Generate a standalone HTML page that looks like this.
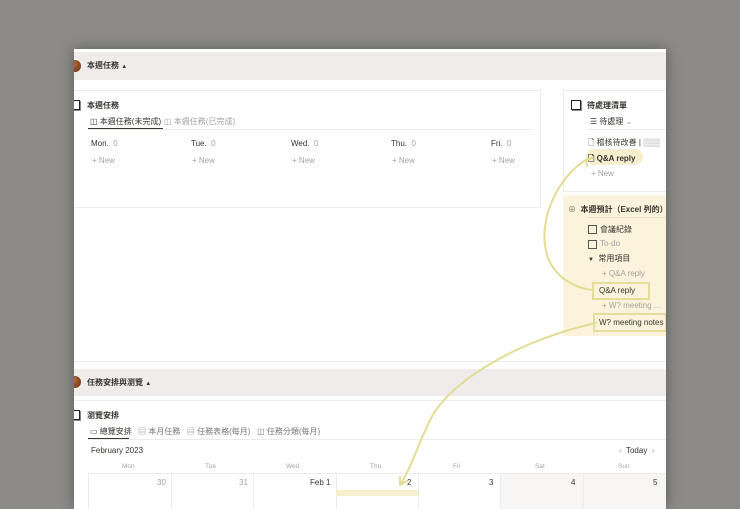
<!DOCTYPE html>
<html><head><meta charset="utf-8"><style>
body{margin:0;width:740px;height:493px;overflow:hidden;background:#8c8b88;font-family:"Liberation Sans","Noto Sans CJK TC",sans-serif;position:relative}
.a{position:absolute;white-space:nowrap}
.page{position:absolute;left:74px;top:49px;width:592px;height:460px;background:#fff;box-shadow:0 0 14px rgba(0,0,0,.35);overflow:hidden}
.band{position:absolute;left:0;width:592px;background:#efeceb}
.t{font-size:8px;color:#37352f}
.g{color:#a5a39f}
.ball{position:absolute;width:12px;height:12px;border-radius:50%;background:radial-gradient(circle at 40% 35%,#b8683a,#6b2e12)}
.cb{position:absolute;width:8px;height:8px;border:1.3px solid #222;box-shadow:1px 1px 0 #888}
.box{position:absolute;width:7px;height:7px;border:1px solid #555}
</style></head><body>
<div class="page">
  <div class="band" style="top:3px;height:28px"></div>
  <div class="ball" style="left:-5px;top:11px"></div>
  <div class="a t" style="left:13px;top:11px;font-weight:bold">本週任務 <span style="font-size:6px">▲</span></div>

  <div style="position:absolute;left:0;top:41px;width:466px;height:116px;border:1px solid #ebebea;border-left:none"></div>
  <div class="cb" style="left:-4px;top:51px"></div>
  <div class="a t" style="left:13px;top:51px;font-weight:bold">本週任務</div>
  <div class="a t" style="left:16px;top:67px">◫ 本週任務(未完成)</div>
  <div class="a t g" style="left:90px;top:67px">◫ 本週任務(已完成)</div>
  <div style="position:absolute;left:14px;top:79px;width:75px;height:1.5px;background:#37352f"></div>
  <div style="position:absolute;left:14px;top:80px;width:444px;height:1px;background:#ebebea"></div>
  <div class="a t" style="left:17px;top:90px">Mon. <span class="g">&nbsp;0</span></div>
  <div class="a t" style="left:117px;top:90px">Tue. <span class="g">&nbsp;0</span></div>
  <div class="a t" style="left:217px;top:90px">Wed. <span class="g">&nbsp;0</span></div>
  <div class="a t" style="left:317px;top:90px">Thu. <span class="g">&nbsp;0</span></div>
  <div class="a t" style="left:417px;top:90px">Fri. <span class="g">&nbsp;0</span></div>
  <div class="a t g" style="left:18px;top:107px">+ New</div>
  <div class="a t g" style="left:118px;top:107px">+ New</div>
  <div class="a t g" style="left:218px;top:107px">+ New</div>
  <div class="a t g" style="left:318px;top:107px">+ New</div>
  <div class="a t g" style="left:418px;top:107px">+ New</div>

  <div style="position:absolute;left:489px;top:41px;width:110px;height:100px;border:1px solid #ebebea"></div>
  <div class="cb" style="left:497px;top:51px"></div>
  <div class="a t" style="left:513px;top:51px;font-weight:bold">待處理清單</div>
  <div class="a t" style="left:516px;top:67px">☰ 待處理 <span class="g">⌄</span></div>
  <div style="position:absolute;left:513px;top:80px;width:80px;height:1px;background:#ebebea"></div>
  <div class="a t" style="left:514px;top:88px">🗋 稽核待改善 | <span class="g">▒▒▒</span></div>
  <div style="position:absolute;left:512px;top:100px;width:57px;height:16px;border-radius:8px;background:#f5efcf"></div>
  <div class="a t" style="left:514px;top:104px;font-weight:bold">🗋 Q&amp;A reply</div>
  <div class="a t g" style="left:517px;top:120px">+ New</div>

  <div style="position:absolute;left:489px;top:146px;width:110px;height:141px;background:#fbf3db"></div>
  <div class="a t" style="left:494px;top:155px;font-weight:bold"><span style="font-weight:normal;color:#777">⊕</span>&nbsp; 本週預計（Excel 列的）</div>
  <div style="position:absolute;left:513px;top:168px;width:80px;height:1px;background:#ece3c6"></div>
  <div class="box" style="left:514px;top:176px"></div><div class="a t" style="left:526px;top:175px">會議紀錄</div>
  <div class="box" style="left:514px;top:191px"></div><div class="a t g" style="left:526px;top:190px">To-do</div>
  <div class="a t" style="left:514px;top:204px"><span style="font-size:6px">▼</span>&nbsp; 常用項目</div>
  <div class="a t g" style="left:528px;top:220px">+ Q&amp;A reply</div>
  <div style="position:absolute;left:518px;top:233px;width:54px;height:14px;border:2px solid #e6dc9c"></div>
  <div class="a t" style="left:525px;top:237px">Q&amp;A reply</div>
  <div class="a t g" style="left:528px;top:252px">+ W? meeting ...</div>
  <div style="position:absolute;left:519px;top:264px;width:70px;height:15px;border:2px solid #e6dc9c"></div>
  <div class="a t" style="left:525px;top:269px">W? meeting notes</div>

  <div style="position:absolute;left:0;top:312px;width:592px;height:1px;background:#ebebea"></div>
  <div class="band" style="top:320px;height:27px"></div>
  <div class="ball" style="left:-5px;top:327px"></div>
  <div class="a t" style="left:13px;top:328px;font-weight:bold">任務安排與瀏覽 <span style="font-size:6px">▲</span></div>
  <div style="position:absolute;left:0;top:351px;width:592px;height:1px;background:#ebebea"></div>
  <div class="cb" style="left:-4px;top:361px"></div>
  <div class="a t" style="left:13px;top:361px;font-weight:bold">瀏覽安排</div>
  <div class="a t" style="left:16px;top:377px">▭ 總覽安排</div>
  <div class="a t g" style="left:64px;top:377px;color:#777">▤ 本月任務 &nbsp;&nbsp;▤ 任務表格(每月) &nbsp;&nbsp;◫ 任務分類(每月)</div>
  <div style="position:absolute;left:14px;top:389px;width:41px;height:1.5px;background:#37352f"></div>
  <div style="position:absolute;left:14px;top:390px;width:578px;height:1px;background:#ebebea"></div>
  <div class="a t" style="left:17px;top:397px">February 2023</div>
  <div class="a t" style="left:545px;top:397px"><span class="g">‹</span>&nbsp; Today &nbsp;<span class="g">›</span></div>
  <div class="a g" style="font-size:6.5px;left:48px;top:414px">Mon</div>
  <div class="a g" style="font-size:6.5px;left:131px;top:414px">Tue</div>
  <div class="a g" style="font-size:6.5px;left:212px;top:414px">Wed</div>
  <div class="a g" style="font-size:6.5px;left:296px;top:414px">Thu</div>
  <div class="a g" style="font-size:6.5px;left:379px;top:414px">Fri</div>
  <div class="a g" style="font-size:6.5px;left:461px;top:414px">Sat</div>
  <div class="a g" style="font-size:6.5px;left:544px;top:414px">Sun</div>
  <div style="position:absolute;left:14px;top:424px;width:578px;height:40px;border-top:1px solid #ebebea"></div>
  <div style="position:absolute;left:426px;top:425px;width:166px;height:40px;background:#f7f6f4"></div>
  <div style="position:absolute;left:97px;top:424px;width:1px;height:40px;background:#ebebea"></div>
  <div style="position:absolute;left:179px;top:424px;width:1px;height:40px;background:#ebebea"></div>
  <div style="position:absolute;left:262px;top:424px;width:1px;height:40px;background:#ebebea"></div>
  <div style="position:absolute;left:344px;top:424px;width:1px;height:40px;background:#ebebea"></div>
  <div style="position:absolute;left:426px;top:424px;width:1px;height:40px;background:#ebebea"></div>
  <div style="position:absolute;left:509px;top:424px;width:1px;height:40px;background:#ebebea"></div>
  <div style="position:absolute;left:14px;top:424px;width:1px;height:40px;background:#ebebea"></div>
  <div class="a t g" style="left:83px;top:429px">30</div>
  <div class="a t g" style="left:165px;top:429px">31</div>
  <div class="a t" style="left:236px;top:429px">Feb 1</div>
  <div class="a t" style="left:333px;top:429px">2</div>
  <div class="a t" style="left:415px;top:429px">3</div>
  <div class="a t" style="left:497px;top:429px">4</div>
  <div class="a t" style="left:579px;top:429px">5</div>
  <div style="position:absolute;left:262px;top:441px;width:82px;height:6px;background:#f7f0cf"></div>
</div>
<svg class="a" style="left:0;top:0" width="740" height="493" viewBox="0 0 740 493" fill="none" stroke="#e3dc94" stroke-width="2" stroke-linecap="round">
  <path d="M586 160 C560 175 535 220 548 258 C556 278 575 288 592 290"/>
  <path d="M586 160 l6 -2 M586 160 l1 6"/>
  <path d="M596 323 C520 340 450 380 430 420 C418 445 410 470 400 485"/>
  <path d="M400 485 l0 -8 M400 485 l7 -4"/>
</svg>
</body></html>
